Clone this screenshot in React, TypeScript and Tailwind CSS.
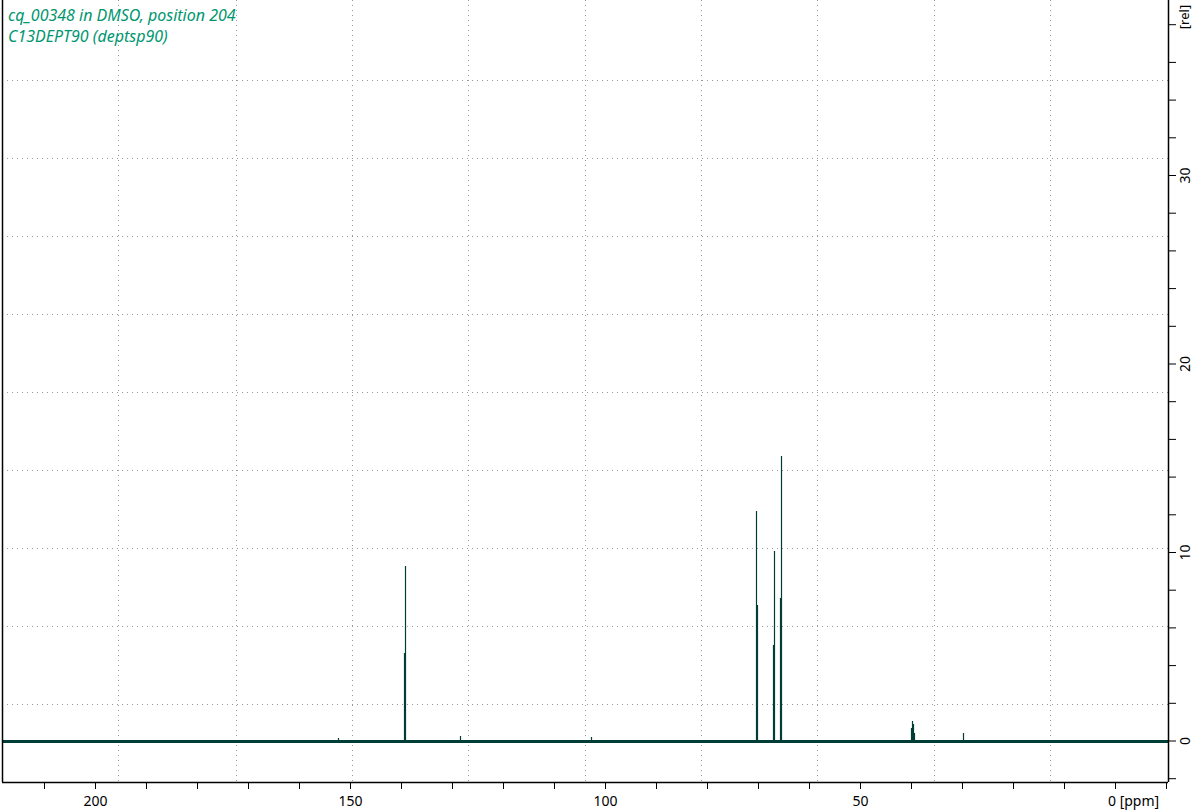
const W = 1199
const H = 811
const X0 = 2
const X1 = 1168
const Y0 = 782
const BASE = 741
const ppmX = (p: number) => 1115 - p * 5.1
const relY = (r: number) => BASE - r * 18.85

const vGrid = [118, 236, 352, 468, 585, 701, 817, 934, 1050]
const hGrid = [80, 158, 236, 314, 392, 470, 548, 626, 704]

const peaks: [number, number][] = [
  [405, 566], [404, 653], [756, 511], [757, 605], [774, 551], [773, 645],
  [781, 456], [780, 598], [911, 728], [912, 721], [913, 724], [914, 733],
  [963, 733], [460, 736], [338, 738], [591, 737],
]

export default function App() {
  const xTicks: number[] = []
  for (let p = 210; p >= -10; p -= 10) xTicks.push(p)
  const yTicks: number[] = []
  for (let r = -2; r <= 38; r += 2) yTicks.push(r)

  return (
    <div className="w-[1199px] h-[811px] bg-white overflow-hidden font-['DejaVu_Sans',sans-serif]">
      <svg width={W} height={H} viewBox={`0 0 ${W} ${H}`}>
        {vGrid.map((x) => (
          <line key={"v" + x} x1={x + 0.5} y1={0} x2={x + 0.5} y2={Y0} stroke="#999" strokeDasharray="1 4" />
        ))}
        {hGrid.map((y) => (
          <line key={"h" + y} x1={X0} y1={y + 0.5} x2={X1} y2={y + 0.5} stroke="#999" strokeDasharray="1 4" />
        ))}

        {/* baseline */}
        <rect x={X0} y={BASE - 1} width={X1 - X0} height={3} fill="#003d36" />
        {peaks.map(([x, y], i) => (
          <line key={i} x1={x + 0.5} y1={y} x2={x + 0.5} y2={BASE} stroke="#003d36" strokeWidth={1.2} />
        ))}

        {/* frame */}
        <line x1={X0 + 0.5} y1={0} x2={X0 + 0.5} y2={Y0} stroke="#000" strokeWidth={1.5} />
        <line x1={X0} y1={Y0 + 0.5} x2={X1} y2={Y0 + 0.5} stroke="#000" strokeWidth={1.5} />
        <line x1={X1 + 0.5} y1={0} x2={X1 + 0.5} y2={Y0} stroke="#000" strokeWidth={1.5} />

        {xTicks.map((p) => {
          const x = ppmX(p)
          if (x < X0 || x > X1) return null
          return <line key={"xt" + p} x1={x + 0.5} y1={Y0} x2={x + 0.5} y2={Y0 + 7} stroke="#000" />
        })}
        {[200, 150, 100, 50].map((p) => (
          <text key={"xl" + p} x={ppmX(p) + 0.5} y={806} textAnchor="middle" fontSize={14} fill="#000">{p}</text>
        ))}
        <text x={1108} y={806} fontSize={14} fill="#000">0 [ppm]</text>

        {yTicks.map((r) => (
          <line key={"yt" + r} x1={X1} y1={relY(r)} x2={X1 + 8} y2={relY(r)} stroke="#000" />
        ))}
        {[0, 10, 20, 30].map((r) => (
          <text key={"yl" + r} x={1186} y={relY(r)} fontSize={14} fill="#000" textAnchor="middle"
            transform={`rotate(-90 1186 ${relY(r)})`} dominantBaseline="middle">{r}</text>
        ))}
        <text x={1186} y={17} fontSize={13} fill="#000" textAnchor="middle"
          transform="rotate(-90 1186 17)" dominantBaseline="middle">[rel]</text>

        <text x={8} y={21} fontSize={16} fontStyle="italic" fill="#00966f">cq_00348 in DMSO, position 204</text>
        <text x={8} y={42} fontSize={16} fontStyle="italic" fill="#00966f">C13DEPT90 (deptsp90)</text>
      </svg>
    </div>
  )
}
